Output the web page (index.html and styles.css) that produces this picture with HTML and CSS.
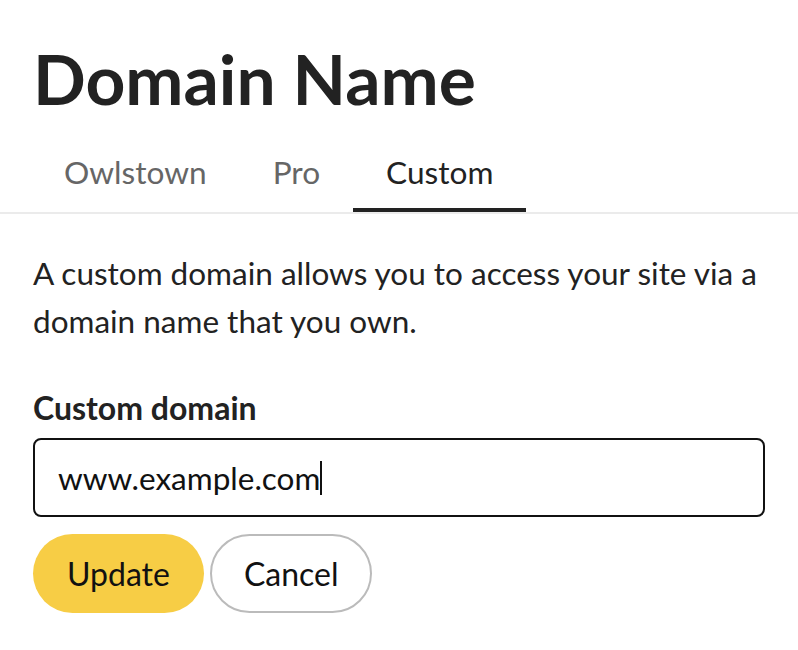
FILE: index.html
```html
<!DOCTYPE html>
<html lang="en">
<head>
    <meta charset="UTF-8">
    <meta name="viewport" content="width=device-width, initial-scale=1.0">
    <title>Domain Name</title>
    <link rel="stylesheet" href="styles.css">
</head>
<body>
    <h1 class="baslik">Domain Name</h1>

    <div class="sekmeler">
        <a class="sekme">Owlstown</a>
        <a class="sekme">Pro</a>
        <a class="sekme aktif">Custom</a>
    </div>

    <div class="icerik">
        <p class="aciklama">A custom domain allows you to access your site via a domain name that you own.</p>

        <label class="etiket" for="alanAdi">Custom domain</label>
        <div class="girisKutusu">
            <span class="girisMetni">www.example.com</span><span class="imlec"></span>
        </div>

        <div class="butonlar">
            <button class="buton guncelle">Update</button>
            <button class="buton iptal">Cancel</button>
        </div>
    </div>
</body>
</html>
```

FILE: styles.css
```css
body {
    font-family: Lato, "Noto Sans", sans-serif;
    background-color: #fff;
    color: #222;
    margin: 0;
    font-size: 32px;
}
.baslik {
    font-size: 69.5px;
    font-weight: 700;
    margin: 0;
    padding: 36px 33px 0;
    line-height: 84px;
}
.sekmeler {
    display: flex;
    padding: 0 31px;
    border-bottom: 2px solid #ebebeb;
}
.sekme {
    font-size: 31.6px;
    padding: 33px 33px 17px;
    line-height: 38px;
    color: #666;
    border-bottom: 4px solid transparent;
}
.sekme.aktif {
    color: #222;
    border-bottom-color: #222;
}
.icerik {
    padding: 0 33px;
}
.aciklama {
    font-size: 31.5px;
    margin: 35px 0 44px;
    line-height: 48px;
}
.etiket {
    display: block;
    font-weight: 700;
    line-height: 38px;
    margin-bottom: 11px;
}
.girisKutusu {
    display: flex;
    align-items: center;
    height: 79px;
    box-sizing: border-box;
    border: 2px solid #111;
    border-radius: 8px;
    padding: 0 23px;
    font-size: 31.5px;
    color: #111;
}
.imlec {
    width: 2px;
    height: 34px;
    background-color: #111;
}
.butonlar {
    display: flex;
    gap: 6px;
    margin-top: 17px;
}
.buton {
    font-family: inherit;
    font-size: 32px;
    height: 79px;
    border-radius: 40px;
    padding: 0 34px;
    cursor: pointer;
    color: #111;
}
.guncelle {
    background-color: #f7cd45;
    border: none;
}
.iptal {
    background-color: #fff;
    border: 2px solid #bbb;
    padding: 0 32px;
}
```
